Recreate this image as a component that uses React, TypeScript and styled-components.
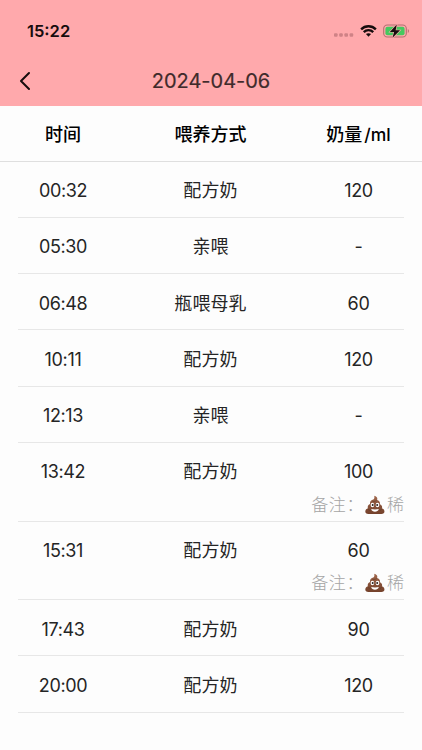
import React from "react";
import styled, { createGlobalStyle } from "styled-components";

const GlobalStyle = createGlobalStyle`
  * { box-sizing: border-box; }
  body {
    margin: 0;
    background: #fdfdfd;
    color: #252525;
    font-family: Inter, "Noto Sans CJK SC", sans-serif;
  }
`;

const Screen = styled.div`
  width: 422px;
  height: 750px;
  overflow: hidden;
  display: flex;
  flex-direction: column;
`;

const Header = styled.header`
  height: 106px;
  flex: none;
  background: #ffa9ac;
`;

const StatusBar = styled.div`
  height: 56px;
  display: flex;
  align-items: center;
  justify-content: space-between;
  padding: 6px 12px 0 27px;
`;

const Clock = styled.span`
  font-size: 16.5px;
  font-weight: 600;
  color: #160c0d;
`;

const StatusIcons = styled.div`
  display: flex;
  align-items: center;
  gap: 6px;
  svg { display: block; }
`;

const SignalDots = styled.svg`
  margin-top: 8px;
`;

const NavBar = styled.nav`
  height: 50px;
  display: grid;
  grid-template-columns: 60px 1fr 60px;
  align-items: center;
`;

const BackButton = styled.button`
  border: 0;
  background: none;
  padding: 0 0 0 17px;
  height: 40px;
  display: flex;
  align-items: center;
`;

const Title = styled.h1`
  margin: 0;
  text-align: center;
  font-size: 20px;
  font-weight: 400;
  letter-spacing: -0.02px;
  color: #402b2b;
  -webkit-text-stroke: 0.2px #402b2b;
`;

const Columns = styled.div`
  display: grid;
  grid-template-columns: 90px 1fr 91px;
  align-items: center;
  text-align: center;
  white-space: nowrap;
`;

const TableHead = styled(Columns)`
  flex: none;
  height: 55.9px;
  padding: 0 18px;
  border-bottom: 1px solid #dfdfdf;
  font-size: 18px;
  font-weight: 500;
  color: #000;
`;

const Unit = styled.span`
  margin-left: 2px;
  font-size: 17.5px;
`;

const Records = styled.main`
  padding: 0 18px;
`;

const Entry = styled.section`
  border-bottom: 1px solid #e7e7e7;
`;

const EntryValues = styled(Columns)`
  height: 55.2px;
  padding-top: 3.5px;
`;

const Cell = styled.span<{ $cjk?: boolean }>`
  font-size: 18px;
  line-height: 26px;
  letter-spacing: ${(p) => (p.$cjk ? "0.1px" : "-0.35px")};
`;

const Note = styled.div`
  height: 22.5px;
  padding-bottom: 9.5px;
  display: flex;
  align-items: center;
  justify-content: flex-end;
  font-size: 17px;
  line-height: 22px;
  color: #a5a5a5;
  font-weight: 300;
  svg { flex: none; margin: 0 2px 0 1px; }
`;

const NoteLabel = styled.span`
  letter-spacing: 0.6px;
`;

const Signal = () => (
  <SignalDots width="20" height="6" viewBox="0 0 20 6" fill="#cf8286">
    <rect x="0" y="1.2" width="3.6" height="3.6" rx="1" />
    <rect x="5.2" y="1.2" width="3.6" height="3.6" rx="1" />
    <rect x="10.4" y="1.2" width="3.6" height="3.6" rx="1" />
    <rect x="15.6" y="1.2" width="3.6" height="3.6" rx="1" />
  </SignalDots>
);

const Wifi = () => (
  <svg width="17" height="14" viewBox="0 0 18 14" fill="none" stroke="#160c0d" strokeWidth="2.5">
    <path d="M1.2 5.2C5.5.9 12.5.9 16.8 5.2" />
    <path d="M4 8.2c2.8-2.8 7.2-2.8 10 0" />
    <path d="M9 13 6.3 10.3c1.5-1.4 3.9-1.4 5.4 0Z" fill="#160c0d" stroke="none" />
  </svg>
);

const Battery = () => (
  <svg width="27" height="16" viewBox="0 0 27 16">
    <rect x=".7" y="2" width="22.6" height="12" rx="3.6" fill="none" stroke="#b46f70" strokeWidth="1.1" />
    <rect x="2.4" y="3.7" width="19.2" height="8.6" rx="2.1" fill="#45c95f" />
    <path d="M24.8 6v4c1.5-.5 1.5-3.5 0-4Z" fill="#b46f70" />
    <path d="M13.8 1.6 6.8 8.9h4.3l-1.6 5.9 7.5-7.5h-4.4Z" fill="#160c0d" stroke="#ffa9ac" strokeWidth="1.2" paintOrder="stroke" />
  </svg>
);

const Poop = () => (
  <svg width="20" height="20" viewBox="0 0 20 20" role="img" aria-label="💩">
    <defs>
      <linearGradient id="swirl" x1="0" y1="0" x2="0" y2="1">
        <stop offset="0" stopColor="#a0674c" />
        <stop offset="1" stopColor="#74412b" />
      </linearGradient>
    </defs>
    <path d="M9.2.8c2.8.7 3.6 2.5 2.9 4.1 2.2.5 3.4 2.4 2.7 4.3 2 .7 2.8 2.5 2.1 4.1 3.5 1.2 3.5 5.6-.6 5.6H3.4c-4.1 0-4-4.4-.5-5.6-.6-1.9.3-3.7 2.2-4.2-.4-2.2.6-3.5 2.5-4.3C9 4.2 9.8 3.1 9.2.8Z" fill="url(#swirl)" />
    <path d="M7.3 6.3c1.7.3 3.2 0 4.4-.8M3.2 14.5c1 .7 1.8.8 2.4.6M16.7 14.5c-.9.7-1.7.8-2.3.6" fill="none" stroke="#54301f" strokeWidth=".5" />
    <ellipse cx="7.4" cy="10" rx="1.8" ry="2.3" fill="#fff" />
    <ellipse cx="12.5" cy="10" rx="1.8" ry="2.3" fill="#fff" />
    <circle cx="7.7" cy="10.1" r="1" fill="#28201e" />
    <circle cx="12.2" cy="10.1" r="1" fill="#28201e" />
    <path d="M6.2 14c2.3.6 5.3.6 7.6 0-.7 3.5-6.9 3.6-7.6 0Z" fill="#fff" />
  </svg>
);

type RecordItem = { time: string; method: string; amount: string; note?: string };

const records: RecordItem[] = [
  { time: "00:32", method: "配方奶", amount: "120" },
  { time: "05:30", method: "亲喂", amount: "-" },
  { time: "06:48", method: "瓶喂母乳", amount: "60" },
  { time: "10:11", method: "配方奶", amount: "120" },
  { time: "12:13", method: "亲喂", amount: "-" },
  { time: "13:42", method: "配方奶", amount: "100", note: "稀" },
  { time: "15:31", method: "配方奶", amount: "60", note: "稀" },
  { time: "17:43", method: "配方奶", amount: "90" },
  { time: "20:00", method: "配方奶", amount: "120" },
];

export default function App() {
  return (
    <Screen>
      <GlobalStyle />
      <Header>
        <StatusBar>
          <Clock>15:22</Clock>
          <StatusIcons>
            <Signal />
            <Wifi />
            <Battery />
          </StatusIcons>
        </StatusBar>
        <NavBar>
          <BackButton aria-label="返回">
            <svg width="14" height="20" viewBox="0 0 14 20" fill="none" stroke="#160c0d" strokeWidth="2" strokeLinecap="round" strokeLinejoin="round">
              <path d="M12 2 4 10l8 8" />
            </svg>
          </BackButton>
          <Title>2024-04-06</Title>
        </NavBar>
      </Header>
      <TableHead>
        <span>时间</span>
        <span>喂养方式</span>
        <span>奶量<Unit>/ml</Unit></span>
      </TableHead>
      <Records>
        {records.map((r) => (
          <Entry key={r.time}>
            <EntryValues>
              <Cell>{r.time}</Cell>
              <Cell $cjk>{r.method}</Cell>
              <Cell>{r.amount}</Cell>
            </EntryValues>
            {r.note && (
              <Note>
                <NoteLabel>备注：</NoteLabel>
                <Poop />
                <span>{r.note}</span>
              </Note>
            )}
          </Entry>
        ))}
      </Records>
    </Screen>
  );
}
